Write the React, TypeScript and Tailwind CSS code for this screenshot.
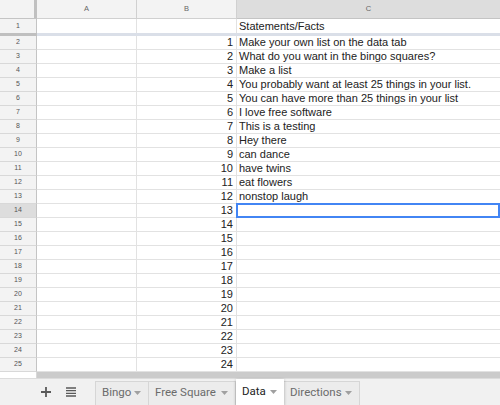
import React from "react";

// ── Spreadsheet grid + sheet tabs ──────────────────────────

const facts = [
  "Make your own list on the data tab",
  "What do you want in the bingo squares?",
  "Make a list",
  "You probably want at least 25 things in your list.",
  "You can have more than 25 things in your list",
  "I love free software",
  "This is a testing",
  "Hey there",
  "can dance",
  "have twins",
  "eat flowers",
  "nonstop laugh",
];

const SELECTED_ROW = 14;

function Caret() {
  return (
    <svg width="7" height="4" viewBox="0 0 7 4" className="shrink-0">
      <path d="M0 0h7L3.5 4z" fill="#a0a0a0" />
    </svg>
  );
}

function Tab({ label, width, active }: { label: string; width: string; active?: boolean }) {
  return (
    <div
      className={`${width} flex items-center justify-between pl-[6px] pr-[7px] text-[11.5px] shrink-0
        ${active
          ? "h-[26px] mb-[2px] pb-[1px] bg-white text-[#222] shadow-[0_1px_3px_rgba(0,0,0,0.3)] relative z-10"
          : "h-[26px] pb-[3px] bg-[#ececec] text-[#6b6b6b] border-l border-t border-r border-[#d6d6d6] -ml-px first:ml-0"}`}
      style={{ fontFamily: "Roboto, 'Liberation Sans', sans-serif" }}
    >
      <span>{label}</span>
      <Caret />
    </div>
  );
}

function Row({ n }: { n: number }) {
  const sel = n === SELECTED_ROW;
  const b = n - 1;
  const c = facts[n - 2];
  return (
    <div className="flex h-[14px]">
      <div className={`w-[37px] shrink-0 border-r border-r-[#c4c4c4] border-b border-b-[#d8d8d8] text-[7px] text-[#555] flex items-center justify-center ${sel ? "bg-[#dddddd]" : "bg-[#f3f3f3]"}`}>
        {n}
      </div>
      <div className="w-[100px] shrink-0 border-r border-b border-[#e2e2e2]" />
      <div className="w-[100px] shrink-0 border-r border-b border-[#e2e2e2] text-right pr-[3px] text-[11px] leading-[13px] text-[#222]">
        {b}
      </div>
      <div className="flex-1 relative border-b border-[#e2e2e2] pl-[2px] text-[11px] leading-[13px] text-[#222] whitespace-nowrap overflow-visible">
        {c}
        {sel && <div className="absolute -top-px -left-px right-0 -bottom-px border-2 border-[#4285f4]" />}
      </div>
    </div>
  );
}

export default function App() {
  const rows = Array.from({ length: 24 }, (_, i) => i + 2);
  return (
    <div
      className="w-[500px] h-[405px] overflow-hidden bg-white flex flex-col"
      style={{ fontFamily: "'Liberation Sans', Arial, sans-serif" }}
    >
      {/* column headers */}
      <div className="flex h-[19px] shrink-0">
        <div className="w-[37px] shrink-0 flex border-b border-[#c4c4c4]">
          <div className="w-[34px] bg-[#f3f3f3]" />
          <div className="w-[3px] bg-[#c0c0c0]" />
        </div>
        <div className="w-[100px] shrink-0 bg-[#f3f3f3] border-r border-b border-[#d0d0d0] text-[7.5px] text-[#666] flex items-center justify-center">A</div>
        <div className="w-[100px] shrink-0 bg-[#f3f3f3] border-r border-b border-[#d0d0d0] text-[7.5px] text-[#666] flex items-center justify-center">B</div>
        <div className="flex-1 bg-[#dddddd] border-b border-[#c4c4c4] text-[7.5px] text-[#666] flex items-center justify-center">C</div>
      </div>

      {/* frozen row 1 */}
      <div className="flex h-[14px] shrink-0">
        <div className="w-[37px] shrink-0 bg-[#f3f3f3] border-r border-[#c4c4c4] text-[7px] text-[#555] flex items-center justify-center">1</div>
        <div className="w-[100px] shrink-0 border-r border-[#e2e2e2]" />
        <div className="w-[100px] shrink-0 border-r border-[#e2e2e2]" />
        <div className="flex-1 pl-[2px] text-[11px] leading-[14px] text-[#222]">Statements/Facts</div>
      </div>
      <div className="flex h-[3px] shrink-0">
        <div className="w-[37px] bg-[#bfbfbf]" />
        <div className="flex-1 bg-[#dadfe8]" />
      </div>

      {rows.map(n => <Row key={n} n={n} />)}

      {/* horizontal scrollbar */}
      <div className="flex h-[6px] shrink-0">
        <div className="w-[37px] bg-white border-r border-[#d8d8d8]" />
        <div className="flex-1 bg-[#cbcbcb]" />
      </div>

      {/* sheet tabs */}
      <div className="flex-1 flex items-end bg-[#f1f1f1] border-t border-[#dcdcdc]">
        <div className="w-[96px] h-full shrink-0 flex items-center pl-[41px] pb-[2px] gap-[15px]">
          <svg width="10" height="10" viewBox="0 0 10 10">
            <path d="M5 0v10M0 5h10" stroke="#5a5a5a" strokeWidth="1.8" />
          </svg>
          <svg width="10" height="10" viewBox="0 0 10 10">
            <path d="M0 1h10M0 3.7h10M0 6.3h10M0 9h10" stroke="#5a5a5a" strokeWidth="1.3" />
          </svg>
        </div>
        <Tab label="Bingo" width="w-[54px]" />
        <Tab label="Free Square" width="w-[88px]" />
        <Tab label="Data" width="w-[48px]" active />
        <Tab label="Directions" width="w-[77px]" />
      </div>
    </div>
  );
}
